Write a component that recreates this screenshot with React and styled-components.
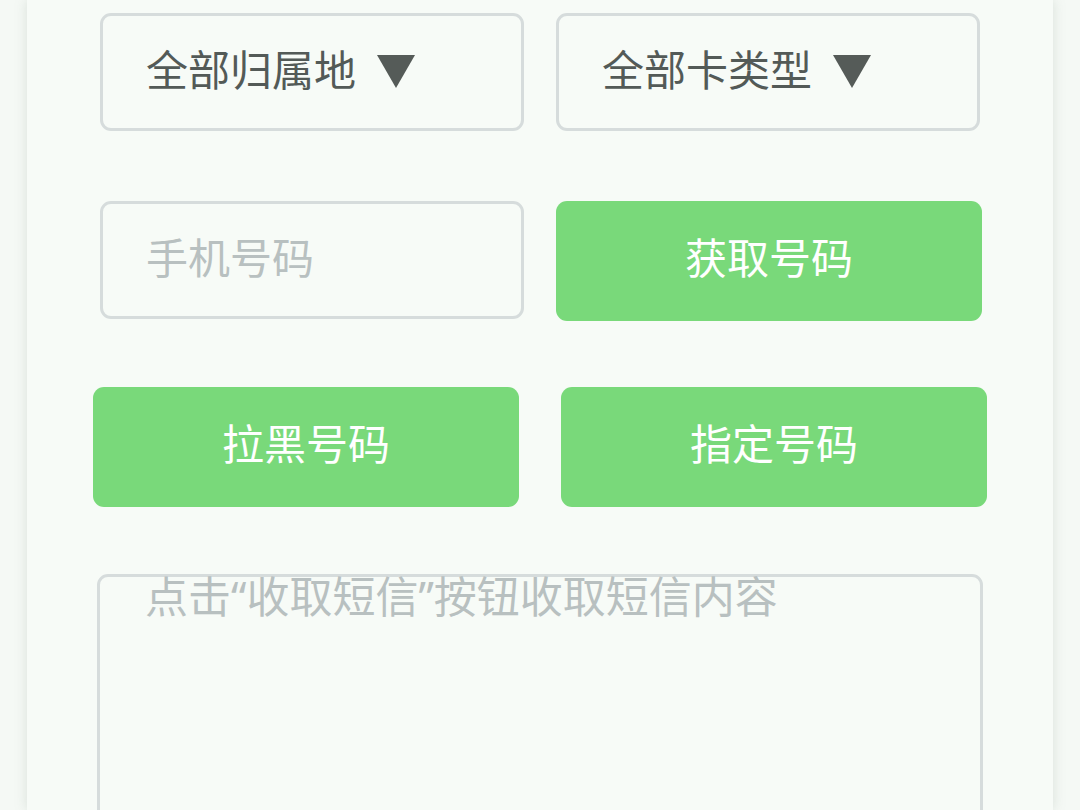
import React from 'react';
import styled, { createGlobalStyle } from 'styled-components';

const GlobalStyle = createGlobalStyle`
  html, body {
    margin: 0;
    padding: 0;
    background: #f5f9f5;
  }
  body {
    font-family: "Noto Sans CJK SC", "Noto Sans", sans-serif;
  }
`;

const Page = styled.div`
  height: 810px;
  overflow: hidden;
  padding: 0 27px;
`;

const Card = styled.div`
  background: #f7fbf7;
  height: 810px;
  padding-top: 13px;
  box-sizing: border-box;
  box-shadow: 0 0 12px rgba(120, 135, 125, 0.22);
`;

const Row = styled.div`
  display: flex;
  gap: ${(p) => p.$gap}px;
  padding-left: ${(p) => p.$left}px;
  margin-bottom: ${(p) => p.$bottom}px;
`;

const Field = styled.div`
  width: 424px;
  height: 118px;
  box-sizing: border-box;
  border: 3px solid #d6dcdc;
  border-radius: 11px;
  display: flex;
  align-items: center;
  padding: 0 0 10px 43px;
  font-size: 42px;
  color: ${(p) => (p.$placeholder ? '#b8c0c0' : '#535a57')};
`;

const Arrow = styled.svg`
  width: 38px;
  height: 33px;
  margin-left: 21px;
  margin-top: 8px;
  flex-shrink: 0;
`;

const GreenButton = styled.button`
  width: 426px;
  height: 120px;
  border: none;
  border-radius: 11px;
  background: #79d97a;
  color: #ffffff;
  font-family: "Noto Sans CJK SC", "Noto Sans", sans-serif;
  font-size: 42px;
  padding: 0 0 12px 0;
  cursor: pointer;
`;

const MessageBox = styled.div`
  width: 886px;
  height: 300px;
  box-sizing: border-box;
  margin-left: 70px;
  border: 3px solid #d6dcdc;
  border-radius: 11px;
  padding-left: 45px;
  font-family: "Noto Sans", "Noto Sans CJK SC", sans-serif;
  font-size: 43px;
  line-height: 40px;
  color: #b8c0c0;
`;

const Select = ({ label }) => (
  <Field>
    {label}
    <Arrow viewBox="0 0 38 33">
      <polygon points="0,0 38,0 19,33" fill="#555b58" />
    </Arrow>
  </Field>
);

export default function App() {
  return (
    <>
      <GlobalStyle />
      <Page>
        <Card>
          <Row $gap={32} $left={73} $bottom={70}>
            <Select label="全部归属地" />
            <Select label="全部卡类型" />
          </Row>
          <Row $gap={32} $left={73} $bottom={66}>
            <Field $placeholder>手机号码</Field>
            <GreenButton>获取号码</GreenButton>
          </Row>
          <Row $gap={42} $left={66} $bottom={67}>
            <GreenButton>拉黑号码</GreenButton>
            <GreenButton>指定号码</GreenButton>
          </Row>
          <MessageBox>点击“收取短信”按钮收取短信内容</MessageBox>
        </Card>
      </Page>
    </>
  );
}
